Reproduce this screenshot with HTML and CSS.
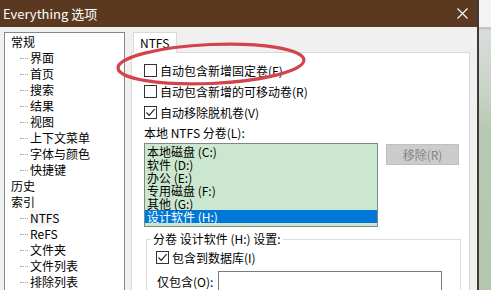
FILE: index.html
```html
<!DOCTYPE html>
<html lang="zh-CN">
<head>
    <meta charset="UTF-8">
    <meta name="viewport" content="width=device-width, initial-scale=1.0">
    <title>Everything 选项</title>
    <link rel="stylesheet" href="styles.css">
</head>
<body>
    <div class="screen">
        <div class="dialog">
            <div class="titlebar">
                <span class="title">Everything 选项</span>
                <svg class="close" width="11" height="11" viewBox="0 0 11 11">
                    <path d="M0.5 0.5 L10.5 10.5 M10.5 0.5 L0.5 10.5" stroke="#fff" stroke-width="1.1" fill="none"/>
                </svg>
            </div>
            <div class="content">
                <ul class="tree">
                    <li class="root">常规</li>
                    <li class="child">界面</li>
                    <li class="child">首页</li>
                    <li class="child">搜索</li>
                    <li class="child">结果</li>
                    <li class="child">视图</li>
                    <li class="child">上下文菜单</li>
                    <li class="child">字体与颜色</li>
                    <li class="child">快捷键</li>
                    <li class="root">历史</li>
                    <li class="root">索引</li>
                    <li class="child"><span class="current">NTFS</span></li>
                    <li class="child">ReFS</li>
                    <li class="child">文件夹</li>
                    <li class="child">文件列表</li>
                    <li class="child">排除列表</li>
                </ul>

                <div class="tabs">
                    <div class="tabstrip">
                        <div class="tab">NTFS</div>
                    </div>
                    <div class="panel">
                        <label class="check"><span class="box"></span>自动包含新增固定卷(F)</label>
                        <label class="check"><span class="box"></span>自动包含新增的可移动卷(R)</label>
                        <label class="check"><span class="box checked"><svg width="11" height="11" viewBox="0 0 11 11"><path d="M1.5 5.5 L4.2 8.3 L9.6 2.2" stroke="#222" stroke-width="1.2" fill="none"/></svg></span>自动移除脱机卷(V)</label>
                        <div class="caption">本地 NTFS 分卷(L):</div>

                        <div class="volumes">
                            <ul class="list">
                                <li>本地磁盘 (C:)</li>
                                <li>软件 (D:)</li>
                                <li>办公 (E:)</li>
                                <li>专用磁盘 (F:)</li>
                                <li>其他 (G:)</li>
                                <li class="selected">设计软件 (H:)</li>
                            </ul>
                            <button class="btn" disabled>移除(R)</button>
                        </div>

                        <fieldset class="group">
                            <legend>分卷 设计软件 (H:) 设置:</legend>
                            <label class="check"><span class="box checked"><svg width="11" height="11" viewBox="0 0 11 11"><path d="M1.5 5.5 L4.2 8.3 L9.6 2.2" stroke="#222" stroke-width="1.2" fill="none"/></svg></span>包含到数据库(I)</label>
                            <div class="field">
                                <span class="field-label">仅包含(O):</span>
                                <span class="input"></span>
                            </div>
                        </fieldset>
                    </div>
                </div>
            </div>
        </div>
        <div class="edge"></div>
        <div class="desktop"></div>

        <!-- 手绘的红圈标注 -->
        <svg class="mark" width="491" height="290" viewBox="0 0 491 290">
            <ellipse cx="211" cy="64" rx="93" ry="19.5" transform="rotate(-2.5 211 64)" stroke="#d3444a" stroke-width="3.2" fill="none"/>
        </svg>
    </div>
</body>
</html>
```

FILE: styles.css
```css
body {
    margin: 0;
    font-family: "Noto Sans CJK SC", "Noto Sans", sans-serif;
    font-size: 12px;
    color: #000;
}
.screen {
    position: relative;
    display: flex;
    width: 491px;
    height: 290px;
    overflow: hidden;
}
.dialog {
    width: 477px;
    display: flex;
    flex-direction: column;
    background-color: #f0f0f0;
}
.titlebar {
    height: 27px;
    flex: none;
    display: flex;
    align-items: center;
    justify-content: space-between;
    padding: 0 9px 1px 3px;
    box-sizing: border-box;
    background-color: #5b3920;
    color: #fff;
    font-size: 13px;
}
.edge {
    width: 2px;
    background-color: #3f3a36;
}
.desktop {
    flex: 1;
    background: linear-gradient(to bottom, #f4f4f4 0, #f4f4f4 27px, #c4c4c4 27px, #c4c4c4 29px, #dadcda 30px, #c9d4c6 90px, #b6c9b2 130px, #b3c6ae 290px);
}
.content {
    flex: 1;
    display: flex;
    align-items: flex-start;
    padding: 5px 0 0 4px;
}

/* 左側ツリー */
.tree {
    width: 121px;
    height: 300px;
    box-sizing: border-box;
    flex: none;
    margin: 0;
    padding: 1px 0 0 0;
    list-style: none;
    background-color: #fff;
    border: 1px solid #828790;
}
.tree li {
    height: 16px;
    line-height: 16px;
    white-space: nowrap;
}
.root {
    padding-left: 6px;
}
.child {
    display: flex;
    align-items: center;
}
.child::before {
    content: "";
    width: 8px;
    margin: 0 2px 0 15px;
    border-top: 1px dotted #a0a0a0;
}
.current {
    background-color: #f6f6f6;
}

/* タブ */
.tabs {
    flex: 1;
    margin: 0 7px 0 6px;
}
.tabstrip {
    display: flex;
}
.tab {
    position: relative;
    z-index: 1;
    width: 44px;
    height: 21px;
    box-sizing: border-box;
    margin: 0 0 -1px 2px;
    padding-left: 6px;
    line-height: 19px;
    background-color: #fff;
    border: 1px solid #d9d9d9;
    border-bottom: none;
}
.panel {
    height: 260px;
    padding: 7px 0 0 12px;
    background-color: #fff;
    border: 1px solid #d9d9d9;
}
.check {
    display: flex;
    align-items: center;
    height: 21px;
    white-space: nowrap;
}
.box {
    width: 13px;
    height: 13px;
    box-sizing: border-box;
    flex: none;
    margin-right: 3px;
    display: flex;
    align-items: center;
    justify-content: center;
    background-color: #fff;
    border: 1px solid #333;
}
.caption {
    height: 20px;
    line-height: 20px;
}

/* 分卷リスト */
.volumes {
    display: flex;
    align-items: flex-start;
}
.list {
    width: 234px;
    height: 84px;
    box-sizing: border-box;
    margin: 0;
    padding: 1px 0 0 0;
    list-style: none;
    background-color: #cce7cf;
    border: 1px solid #7f8a80;
}
.list li {
    height: 13px;
    line-height: 13px;
    padding-left: 2px;
    white-space: nowrap;
}
.list .selected {
    background-color: #0078d7;
    color: #fff;
}
.btn {
    width: 73px;
    height: 21px;
    margin: 1px 0 0 8px;
    padding: 0;
    font-family: inherit;
    font-size: 12px;
    color: #858585;
    background-color: #cccccc;
    border: 1px solid #bfbfbf;
}

/* グループボックス */
.group {
    width: 315px;
    box-sizing: border-box;
    margin: 4px 0 0 2px;
    padding: 0 0 10px 9px;
    border: 1px solid #dcdcdc;
}
.group legend {
    margin-left: -5px;
    padding: 0 2px;
    line-height: 16px;
    white-space: nowrap;
}
.field {
    display: flex;
    align-items: flex-start;
}
.field-label {
    width: 61px;
    margin: 6px 0 0 1px;
    line-height: 16px;
}
.input {
    width: 224px;
    height: 22px;
    box-sizing: border-box;
    margin-top: 3px;
    background-color: #fff;
    border: 1px solid #7a7a7a;
}

/* 注釈 */
.mark {
    position: absolute;
    z-index: 2;
    left: 0;
    top: 0;
    pointer-events: none;
}
```
